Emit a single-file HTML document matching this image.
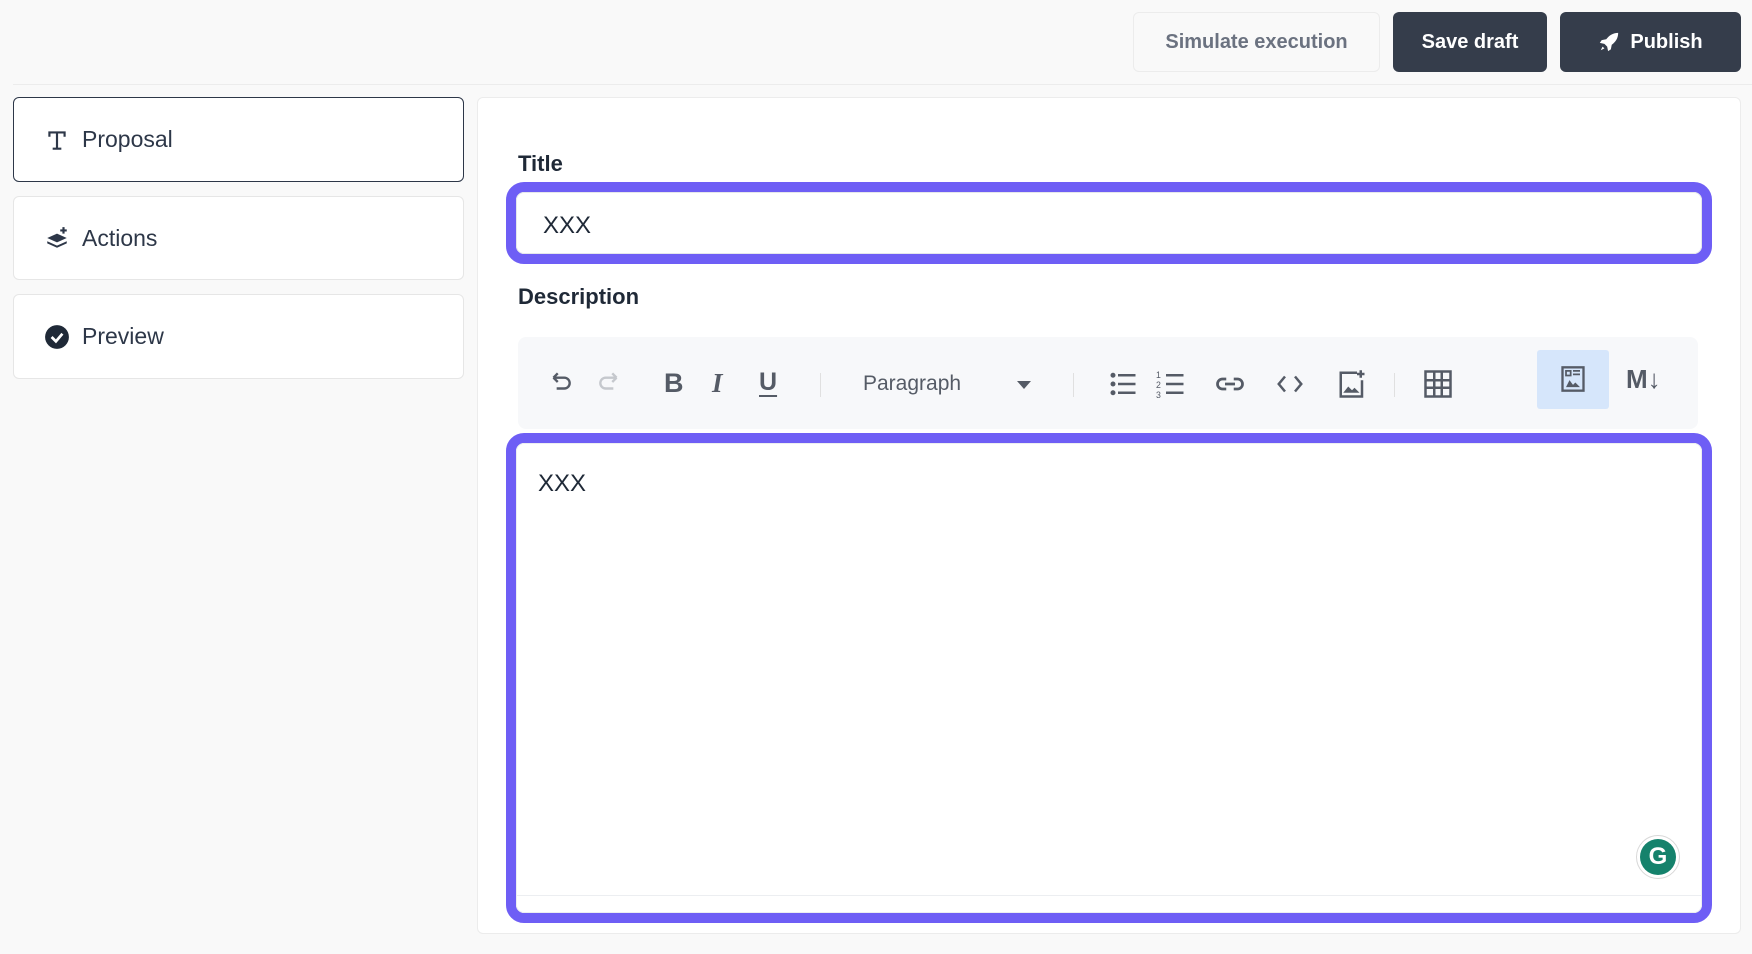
<!DOCTYPE html>
<html><head><meta charset="utf-8"><style>
*{box-sizing:border-box;margin:0;padding:0}
body{width:1752px;height:954px;background:#f9f9f9;font-family:"Liberation Sans",sans-serif;color:#2d3748;position:relative;overflow:hidden}
.abs{position:absolute}
.btn{position:absolute;top:12px;height:60px;border-radius:6px;font-size:20px;font-weight:bold;display:flex;align-items:center;justify-content:center}
.side{position:absolute;left:13px;width:451px;background:#fff;border:1px solid #e6e6e6;border-radius:6px;display:flex;align-items:center;padding-left:30px;font-size:23px;color:#2d3748}
.side svg{margin-right:12px}
.lbl{position:absolute;left:518px;font-size:22px;font-weight:bold;color:#1f2937}
.ring{position:absolute;left:506px;width:1206px;border:10px solid #6e5ef5;border-radius:18px;background:#fff}
.ic{position:absolute;top:369px}
</style></head><body>
<div class="btn" style="left:1133px;width:247px;background:#f9f9f9;border:1px solid #ececec;color:#6b7280;font-weight:bold">Simulate execution</div>
<div class="btn" style="left:1393px;width:154px;background:#353d4b;color:#fff">Save draft</div>
<div class="btn" style="left:1560px;width:181px;background:#353d4b;color:#fff">
<svg width="22" height="22" viewBox="0 0 24 24" style="margin-right:10px"><path d="M22 2c-6 0-10 3-13 7l-5 1-2 3 5 1 3 3 1 5 3-2 1-5c4-3 7-7 7-13z" fill="#fff"/><path d="M5 17l-2 4 4-2z" fill="#fff"/></svg>Publish</div>
<div class="abs" style="left:13px;top:84px;width:1739px;height:1px;background:#ececec"></div>

<div class="side" style="top:97px;height:85px;border:1px solid #2d3748"><svg width="26" height="26" viewBox="0 0 24 24"><path d="M4 4h16v5h-2V6h-5v13h3v2H8v-2h3V6H6v3H4z" fill="#2d3748"/></svg>Proposal</div>
<div class="side" style="top:196px;height:84px"><svg width="26" height="26" viewBox="0 0 24 24"><path d="M12 8l9 4-9 4-9-4z" fill="#2d3748"/><path d="M3 15l9 4 9-4v2l-9 4-9-4z" fill="#2d3748"/><path d="M18 2v6M15 5h6" stroke="#2d3748" stroke-width="2"/></svg>Actions</div>
<div class="side" style="top:294px;height:85px"><svg width="26" height="26" viewBox="0 0 24 24"><circle cx="12" cy="12" r="11" fill="#1f2937"/><path d="M7 12l4 4 6-7" stroke="#fff" stroke-width="2.5" fill="none"/></svg>Preview</div>

<div class="abs" style="left:477px;top:97px;width:1264px;height:837px;background:#fff;border:1px solid #ececec;border-radius:6px"></div>
<div class="lbl" style="top:151px">Title</div>
<div class="ring" style="top:182px;height:82px"><div style="position:absolute;inset:0;border:1px solid #e5e7eb;border-radius:8px;padding:19px 26px;font-size:24px;color:#1f2937">XXX</div></div>
<div class="lbl" style="top:284px">Description</div>
<div class="abs" style="left:518px;top:337px;width:1180px;height:92px;background:#f7f8fa;border-radius:8px"></div>
<div class="abs" style="left:1537px;top:350px;width:72px;height:59px;background:#d6e6fb;border-radius:3px"></div>
<svg class="ic" style="left:548px" width="26" height="26" viewBox="0 0 24 24"><path d="M5 8h10a5 5 0 010 10H8M5 8l4-4M5 8l4 4" stroke="#555b66" stroke-width="2.2" fill="none"/></svg>
<svg class="ic" style="left:596px" width="26" height="26" viewBox="0 0 24 24"><path d="M19 8H9a5 5 0 000 10h7M19 8l-4-4M19 8l-4 4" stroke="#c5c8cd" stroke-width="2.2" fill="none"/></svg>
<div class="abs" style="left:664px;top:368px;font-size:27px;font-weight:bold;color:#555b66">B</div>
<div class="abs" style="left:712px;top:368px;font-size:27px;font-style:italic;font-family:'Liberation Serif',serif;font-weight:bold;color:#555b66">I</div>
<div class="abs" style="left:759px;top:368px;font-size:25px;font-weight:bold;color:#555b66;text-decoration:underline;text-underline-offset:5px">U</div>
<div class="abs" style="left:820px;top:373px;width:1px;height:24px;background:#e0e0e0"></div>
<div class="abs" style="left:863px;top:372px;font-size:21px;color:#555b66">Paragraph</div>
<div class="abs" style="left:1017px;top:381px;border-left:7px solid transparent;border-right:7px solid transparent;border-top:8px solid #555b66"></div>
<div class="abs" style="left:1073px;top:373px;width:1px;height:24px;background:#e0e0e0"></div>
<svg class="ic" style="left:1108px" width="30" height="30" viewBox="0 0 24 24" fill="#555b66"><circle cx="4" cy="5" r="2"/><circle cx="4" cy="12" r="2"/><circle cx="4" cy="19" r="2"/><rect x="8" y="4" width="14" height="2"/><rect x="8" y="11" width="14" height="2"/><rect x="8" y="18" width="14" height="2"/></svg>
<svg class="ic" style="left:1156px" width="30" height="30" viewBox="0 0 24 24" fill="#555b66"><text x="0" y="7" font-size="7" font-family="Liberation Sans">1</text><text x="0" y="15" font-size="7" font-family="Liberation Sans">2</text><text x="0" y="23" font-size="7" font-family="Liberation Sans">3</text><rect x="8" y="4" width="14" height="2"/><rect x="8" y="11" width="14" height="2"/><rect x="8" y="18" width="14" height="2"/></svg>
<svg class="ic" style="left:1215px" width="30" height="30" viewBox="0 0 24 24"><path d="M9 8H6a4 4 0 000 8h3M15 8h3a4 4 0 010 8h-3M8 12h8" stroke="#555b66" stroke-width="2.2" fill="none"/></svg>
<svg class="ic" style="left:1275px" width="30" height="30" viewBox="0 0 24 24"><path d="M8 6l-5 6 5 6M16 6l5 6-5 6" stroke="#555b66" stroke-width="2" fill="none"/></svg>
<svg class="ic" style="left:1337px" width="30" height="30" viewBox="0 0 24 24"><path d="M16 3H3v19h17V9" stroke="#555b66" stroke-width="2" fill="none"/><path d="M19 1v6M16 4h6" stroke="#555b66" stroke-width="2"/><path d="M5 19l4-5 3 3 2-2 4 4z" fill="#555b66"/></svg>
<div class="abs" style="left:1394px;top:373px;width:1px;height:24px;background:#e0e0e0"></div>
<svg class="ic" style="left:1423px" width="30" height="30" viewBox="0 0 24 24"><rect x="2" y="2" width="20" height="20" stroke="#555b66" stroke-width="2" fill="none"/><path d="M2 9h20M2 15h20M9 2v20M15 2v20" stroke="#555b66" stroke-width="2"/></svg>
<svg class="abs" style="left:1559px;top:365px" width="28" height="28" viewBox="0 0 24 24"><rect x="3" y="2" width="18" height="20" stroke="#555b66" stroke-width="2" fill="none"/><path d="M6 5h4v4H6zM12 5h6M12 8h6" stroke="#555b66" stroke-width="1.5" fill="none"/><path d="M6 19l3-6 3 4 2-2 4 4z" fill="#555b66"/></svg>
<div class="abs" style="left:1626px;top:364px;font-size:26px;font-weight:bold;color:#555b66">M↓</div>

<div class="ring" style="top:433px;height:490px"><div style="position:absolute;inset:0;border:1px solid #eceef1;border-radius:8px"></div>
<div style="position:absolute;left:0;right:0;top:452px;height:1px;background:#eceef1"></div>
<div style="position:absolute;left:22px;top:27px;font-size:24px;color:#1f2937">XXX</div>
<div style="position:absolute;left:1120px;top:392px;width:44px;height:44px;border-radius:50%;background:#fff;border:1px solid #d8d8d8;display:flex;align-items:center;justify-content:center"><div style="width:36px;height:36px;border-radius:50%;background:#15826c;color:#fff;font-weight:bold;font-size:24px;text-align:center;line-height:36px">G</div></div>
</div>
</body></html>
